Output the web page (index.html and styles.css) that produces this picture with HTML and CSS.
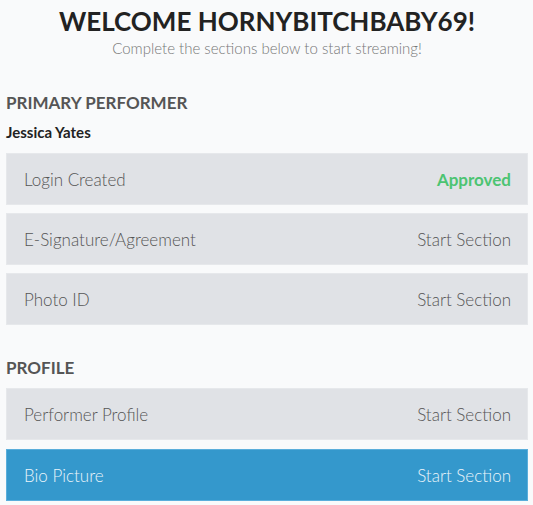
FILE: index.html
```html
<!DOCTYPE html>
<html>
<head>
<meta charset="utf-8">
<link rel="stylesheet" href="styles.css">
</head>
<body>
<div class="page">
  <header class="hero">
    <h1 class="title">WELCOME HORNYBITCHBABY69!</h1>
    <p class="subtitle">Complete the sections below to start streaming!</p>
  </header>
  <section class="group">
    <h2 class="group-title">PRIMARY PERFORMER</h2>
    <div class="person">Jessica Yates</div>
    <div class="rows">
      <div class="row"><span class="label">Login Created</span><span class="status approved">Approved</span></div>
      <div class="row"><span class="label">E-Signature/Agreement</span><span class="status">Start Section</span></div>
      <div class="row"><span class="label">Photo ID</span><span class="status">Start Section</span></div>
    </div>
  </section>
  <section class="group profile">
    <h2 class="group-title">PROFILE</h2>
    <div class="rows">
      <div class="row"><span class="label">Performer Profile</span><span class="status">Start Section</span></div>
      <div class="row active"><span class="label">Bio Picture</span><span class="status">Start Section</span></div>
    </div>
  </section>
</div>
</body>
</html>
```
FILE: styles.css
```css
html, body {
  margin: 0;
  padding: 0;
  background: #f9fafb;
}
body {
  font-family: Lato, "Open Sans", sans-serif;
  color: #333;
}
.page {
  padding: 4px 5px 0 6px;
}
.hero {
  text-align: center;
}
.title {
  margin: 0;
  font-size: 26px;
  font-weight: 700;
  color: #222;
  line-height: 34px;
}
.subtitle {
  margin: 0;
  font-size: 15px;
  font-weight: 300;
  color: #777;
  line-height: 20px;
}
.group {
  margin-top: 33px;
}
.group.profile {
  margin-top: 31px;
}
.group-title {
  margin: 0;
  font-size: 17px;
  font-weight: 700;
  color: #555;
  line-height: 24px;
}
.person {
  font-size: 15px;
  font-weight: 700;
  color: #222;
  line-height: 20px;
  margin-top: 7px;
  margin-bottom: 11px;
}
.profile .rows {
  margin-top: 8px;
  gap: 9px;
}
.rows {
  display: flex;
  flex-direction: column;
  gap: 8px;
}
.row {
  display: flex;
  justify-content: space-between;
  align-items: center;
  height: 52px;
  box-sizing: border-box;
  padding: 0 16px 0 17px;
  background: #e0e2e6;
  border: 1px solid #e6e8eb;
  font-size: 17px;
  font-weight: 300;
  color: #555;
}
.status.approved {
  color: #4cc472;
  font-weight: 700;
}
.row.active {
  background: #3498cc;
  border-color: #5aaedb;
  color: #eaf4fa;
}
```
